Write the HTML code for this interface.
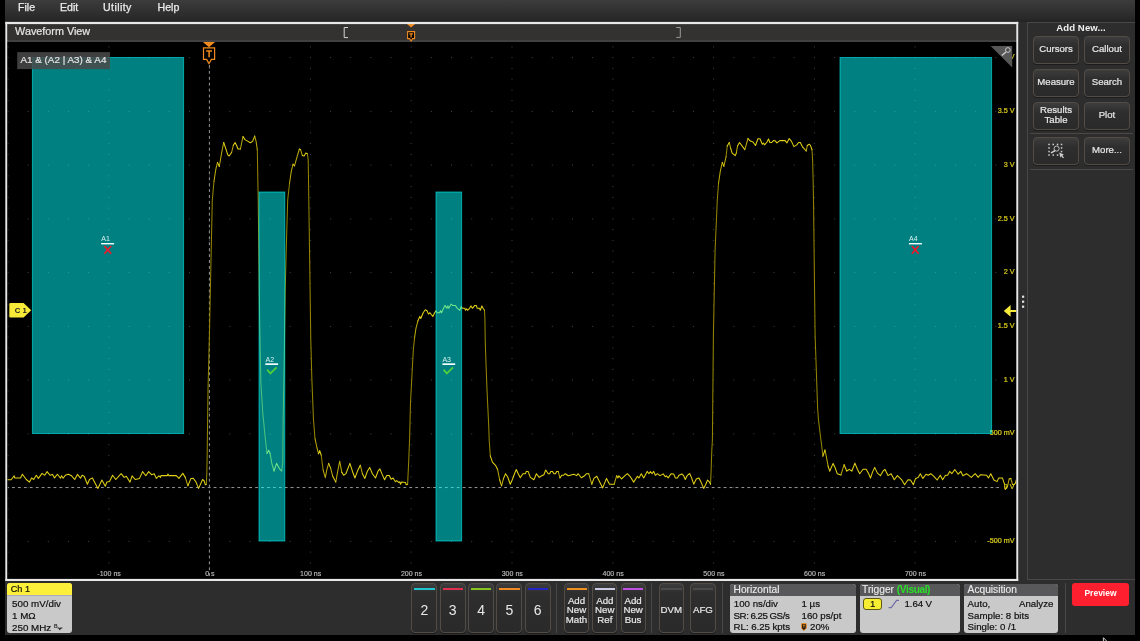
<!DOCTYPE html>
<html><head><meta charset="utf-8"><title>Scope</title>
<style>
html,body{margin:0;padding:0;background:#000;}
body{width:1140px;height:641px;position:relative;overflow:hidden;font-family:"Liberation Sans",sans-serif;}
.abs{position:absolute;}
#bg{left:5px;top:0;width:1130px;height:635px;background:#2d2d2d;}
#menu{left:5px;top:0;width:1130px;height:22px;background:linear-gradient(#3c3c3c 0%,#2c2c2c 70%,#242424 100%);}
#menu span{position:absolute;top:0.45px;font-size:10.6px;color:#ececec;line-height:14px;-webkit-text-stroke:0.25px #ececec;}
#frame{left:6px;top:23px;width:1011px;height:557px;background:#000;}
#title{left:7px;top:24px;width:1010px;height:18px;background:#333231;border-bottom:0;}
#titleline{left:7px;top:40px;width:1010px;height:2px;background:#414141;}
#title span{position:absolute;left:8.1px;top:0.45px;font-size:10.8px;color:#e6e6e6;line-height:14px;-webkit-text-stroke:0.2px #e6e6e6;}
#panel{left:1027px;top:22px;width:108px;height:558px;border:1px solid #4b4744;border-right:0;box-sizing:border-box;background:#2d2d2d;}
.btn{position:absolute;box-sizing:border-box;border:1px solid #524c47;border-radius:4px;background:linear-gradient(#3d3d3e 0,#2e2e2e 9px,#2a2a2a 100%);color:#e8e8e8;text-align:center;box-shadow:0 1px 0 #1c1c1c;}
.pb{width:46px;height:28px;font-size:9.6px;line-height:24.2px;-webkit-text-stroke:0.2px #e8e8e8;}
.sep{position:absolute;background:#4b4744;}
.cb{top:583px;width:26px;height:50px;font-size:14px;line-height:52.4px;}
.cb i{position:absolute;left:2px;top:4px;width:20.4px;height:2px;display:block;}
.tb{top:583px;width:25px;height:50px;font-size:9.7px;line-height:9.6px;-webkit-text-stroke:0.2px #e8e8e8;}
.tb i{position:absolute;left:1.5px;top:4px;width:20px;height:2px;display:block;}
.tb b{font-weight:normal;display:block;position:absolute;left:-4px;right:-4px;}
.badge{position:absolute;top:584px;height:49px;border-radius:3px;background:#c9c9c9;overflow:hidden;color:#101010;font-size:9.7px;-webkit-text-stroke:0.2px #101010;}
.badge .hd{position:absolute;left:0;top:0;right:0;height:11.5px;background:#58585a;color:#eaeaea;font-size:10.2px;line-height:11px;-webkit-text-stroke:0.15px #eaeaea;}
.badge .hd span{position:absolute;left:3.6px;top:0.4px;white-space:nowrap;}
.badge p{position:absolute;margin:0;white-space:nowrap;line-height:11px;}
svg text{font-family:"Liberation Sans",sans-serif;}
#root{position:absolute;left:0;top:0;width:1140px;height:641px;will-change:transform;}
</style></head><body><div id="root">
<div class="abs" id="bg"></div>
<div class="abs" id="menu"><span style="left:13px">File</span><span style="left:55px">Edit</span><span style="left:98px;letter-spacing:0.42px">Utility</span><span style="left:152.5px">Help</span></div>
<div class="abs" id="frame"></div>
<div class="abs" id="title"><span>Waveform View</span></div>
<div class="abs" id="titleline"></div>

<svg class="abs" style="left:0;top:0" width="1140" height="641" viewBox="0 0 1140 641">
<defs><clipPath id="pc"><rect x="7.5" y="42" width="1009" height="537"/></clipPath></defs>
<g clip-path="url(#pc)">
<g fill="#444444"><rect x="7.5" y="46.4" width="1" height="1"/><rect x="7.5" y="57.1" width="1" height="1"/><rect x="7.5" y="67.9" width="1" height="1"/><rect x="7.5" y="78.6" width="1" height="1"/><rect x="7.5" y="89.4" width="1" height="1"/><rect x="7.5" y="100.1" width="1" height="1"/><rect x="7.5" y="110.9" width="1" height="1"/><rect x="7.5" y="121.6" width="1" height="1"/><rect x="7.5" y="132.4" width="1" height="1"/><rect x="7.5" y="143.1" width="1" height="1"/><rect x="7.5" y="153.9" width="1" height="1"/><rect x="7.5" y="164.6" width="1" height="1"/><rect x="7.5" y="175.4" width="1" height="1"/><rect x="7.5" y="186.1" width="1" height="1"/><rect x="7.5" y="196.9" width="1" height="1"/><rect x="7.5" y="207.6" width="1" height="1"/><rect x="7.5" y="218.4" width="1" height="1"/><rect x="7.5" y="229.1" width="1" height="1"/><rect x="7.5" y="239.9" width="1" height="1"/><rect x="7.5" y="250.6" width="1" height="1"/><rect x="7.5" y="261.4" width="1" height="1"/><rect x="7.5" y="272.1" width="1" height="1"/><rect x="7.5" y="282.9" width="1" height="1"/><rect x="7.5" y="293.6" width="1" height="1"/><rect x="7.5" y="304.4" width="1" height="1"/><rect x="7.5" y="315.1" width="1" height="1"/><rect x="7.5" y="325.9" width="1" height="1"/><rect x="7.5" y="336.6" width="1" height="1"/><rect x="7.5" y="347.4" width="1" height="1"/><rect x="7.5" y="358.1" width="1" height="1"/><rect x="7.5" y="368.9" width="1" height="1"/><rect x="7.5" y="379.6" width="1" height="1"/><rect x="7.5" y="390.4" width="1" height="1"/><rect x="7.5" y="401.1" width="1" height="1"/><rect x="7.5" y="411.9" width="1" height="1"/><rect x="7.5" y="422.6" width="1" height="1"/><rect x="7.5" y="433.4" width="1" height="1"/><rect x="7.5" y="444.1" width="1" height="1"/><rect x="7.5" y="454.9" width="1" height="1"/><rect x="7.5" y="465.6" width="1" height="1"/><rect x="7.5" y="476.4" width="1" height="1"/><rect x="7.5" y="487.1" width="1" height="1"/><rect x="7.5" y="497.9" width="1" height="1"/><rect x="7.5" y="508.6" width="1" height="1"/><rect x="7.5" y="519.4" width="1" height="1"/><rect x="7.5" y="530.1" width="1" height="1"/><rect x="7.5" y="540.9" width="1" height="1"/><rect x="7.5" y="551.6" width="1" height="1"/><rect x="7.5" y="562.4" width="1" height="1"/><rect x="7.5" y="573.1" width="1" height="1"/><rect x="27.7" y="57.1" width="1" height="1"/><rect x="27.7" y="110.9" width="1" height="1"/><rect x="27.7" y="164.6" width="1" height="1"/><rect x="27.7" y="218.4" width="1" height="1"/><rect x="27.7" y="272.1" width="1" height="1"/><rect x="27.7" y="325.9" width="1" height="1"/><rect x="27.7" y="379.6" width="1" height="1"/><rect x="27.7" y="433.4" width="1" height="1"/><rect x="27.7" y="487.1" width="1" height="1"/><rect x="27.7" y="540.9" width="1" height="1"/><rect x="47.8" y="57.1" width="1" height="1"/><rect x="47.8" y="110.9" width="1" height="1"/><rect x="47.8" y="164.6" width="1" height="1"/><rect x="47.8" y="218.4" width="1" height="1"/><rect x="47.8" y="272.1" width="1" height="1"/><rect x="47.8" y="325.9" width="1" height="1"/><rect x="47.8" y="379.6" width="1" height="1"/><rect x="47.8" y="433.4" width="1" height="1"/><rect x="47.8" y="487.1" width="1" height="1"/><rect x="47.8" y="540.9" width="1" height="1"/><rect x="68" y="57.1" width="1" height="1"/><rect x="68" y="110.9" width="1" height="1"/><rect x="68" y="164.6" width="1" height="1"/><rect x="68" y="218.4" width="1" height="1"/><rect x="68" y="272.1" width="1" height="1"/><rect x="68" y="325.9" width="1" height="1"/><rect x="68" y="379.6" width="1" height="1"/><rect x="68" y="433.4" width="1" height="1"/><rect x="68" y="487.1" width="1" height="1"/><rect x="68" y="540.9" width="1" height="1"/><rect x="88.1" y="57.1" width="1" height="1"/><rect x="88.1" y="110.9" width="1" height="1"/><rect x="88.1" y="164.6" width="1" height="1"/><rect x="88.1" y="218.4" width="1" height="1"/><rect x="88.1" y="272.1" width="1" height="1"/><rect x="88.1" y="325.9" width="1" height="1"/><rect x="88.1" y="379.6" width="1" height="1"/><rect x="88.1" y="433.4" width="1" height="1"/><rect x="88.1" y="487.1" width="1" height="1"/><rect x="88.1" y="540.9" width="1" height="1"/><rect x="108.3" y="46.4" width="1" height="1"/><rect x="108.3" y="57.1" width="1" height="1"/><rect x="108.3" y="67.9" width="1" height="1"/><rect x="108.3" y="78.6" width="1" height="1"/><rect x="108.3" y="89.4" width="1" height="1"/><rect x="108.3" y="100.1" width="1" height="1"/><rect x="108.3" y="110.9" width="1" height="1"/><rect x="108.3" y="121.6" width="1" height="1"/><rect x="108.3" y="132.4" width="1" height="1"/><rect x="108.3" y="143.1" width="1" height="1"/><rect x="108.3" y="153.9" width="1" height="1"/><rect x="108.3" y="164.6" width="1" height="1"/><rect x="108.3" y="175.4" width="1" height="1"/><rect x="108.3" y="186.1" width="1" height="1"/><rect x="108.3" y="196.9" width="1" height="1"/><rect x="108.3" y="207.6" width="1" height="1"/><rect x="108.3" y="218.4" width="1" height="1"/><rect x="108.3" y="229.1" width="1" height="1"/><rect x="108.3" y="239.9" width="1" height="1"/><rect x="108.3" y="250.6" width="1" height="1"/><rect x="108.3" y="261.4" width="1" height="1"/><rect x="108.3" y="272.1" width="1" height="1"/><rect x="108.3" y="282.9" width="1" height="1"/><rect x="108.3" y="293.6" width="1" height="1"/><rect x="108.3" y="304.4" width="1" height="1"/><rect x="108.3" y="315.1" width="1" height="1"/><rect x="108.3" y="325.9" width="1" height="1"/><rect x="108.3" y="336.6" width="1" height="1"/><rect x="108.3" y="347.4" width="1" height="1"/><rect x="108.3" y="358.1" width="1" height="1"/><rect x="108.3" y="368.9" width="1" height="1"/><rect x="108.3" y="379.6" width="1" height="1"/><rect x="108.3" y="390.4" width="1" height="1"/><rect x="108.3" y="401.1" width="1" height="1"/><rect x="108.3" y="411.9" width="1" height="1"/><rect x="108.3" y="422.6" width="1" height="1"/><rect x="108.3" y="433.4" width="1" height="1"/><rect x="108.3" y="444.1" width="1" height="1"/><rect x="108.3" y="454.9" width="1" height="1"/><rect x="108.3" y="465.6" width="1" height="1"/><rect x="108.3" y="476.4" width="1" height="1"/><rect x="108.3" y="487.1" width="1" height="1"/><rect x="108.3" y="497.9" width="1" height="1"/><rect x="108.3" y="508.6" width="1" height="1"/><rect x="108.3" y="519.4" width="1" height="1"/><rect x="108.3" y="530.1" width="1" height="1"/><rect x="108.3" y="540.9" width="1" height="1"/><rect x="108.3" y="551.6" width="1" height="1"/><rect x="108.3" y="562.4" width="1" height="1"/><rect x="108.3" y="573.1" width="1" height="1"/><rect x="128.5" y="57.1" width="1" height="1"/><rect x="128.5" y="110.9" width="1" height="1"/><rect x="128.5" y="164.6" width="1" height="1"/><rect x="128.5" y="218.4" width="1" height="1"/><rect x="128.5" y="272.1" width="1" height="1"/><rect x="128.5" y="325.9" width="1" height="1"/><rect x="128.5" y="379.6" width="1" height="1"/><rect x="128.5" y="433.4" width="1" height="1"/><rect x="128.5" y="487.1" width="1" height="1"/><rect x="128.5" y="540.9" width="1" height="1"/><rect x="148.6" y="57.1" width="1" height="1"/><rect x="148.6" y="110.9" width="1" height="1"/><rect x="148.6" y="164.6" width="1" height="1"/><rect x="148.6" y="218.4" width="1" height="1"/><rect x="148.6" y="272.1" width="1" height="1"/><rect x="148.6" y="325.9" width="1" height="1"/><rect x="148.6" y="379.6" width="1" height="1"/><rect x="148.6" y="433.4" width="1" height="1"/><rect x="148.6" y="487.1" width="1" height="1"/><rect x="148.6" y="540.9" width="1" height="1"/><rect x="168.8" y="57.1" width="1" height="1"/><rect x="168.8" y="110.9" width="1" height="1"/><rect x="168.8" y="164.6" width="1" height="1"/><rect x="168.8" y="218.4" width="1" height="1"/><rect x="168.8" y="272.1" width="1" height="1"/><rect x="168.8" y="325.9" width="1" height="1"/><rect x="168.8" y="379.6" width="1" height="1"/><rect x="168.8" y="433.4" width="1" height="1"/><rect x="168.8" y="487.1" width="1" height="1"/><rect x="168.8" y="540.9" width="1" height="1"/><rect x="188.9" y="57.1" width="1" height="1"/><rect x="188.9" y="110.9" width="1" height="1"/><rect x="188.9" y="164.6" width="1" height="1"/><rect x="188.9" y="218.4" width="1" height="1"/><rect x="188.9" y="272.1" width="1" height="1"/><rect x="188.9" y="325.9" width="1" height="1"/><rect x="188.9" y="379.6" width="1" height="1"/><rect x="188.9" y="433.4" width="1" height="1"/><rect x="188.9" y="487.1" width="1" height="1"/><rect x="188.9" y="540.9" width="1" height="1"/><rect x="209.1" y="46.4" width="1" height="1"/><rect x="209.1" y="57.1" width="1" height="1"/><rect x="209.1" y="67.9" width="1" height="1"/><rect x="209.1" y="78.6" width="1" height="1"/><rect x="209.1" y="89.4" width="1" height="1"/><rect x="209.1" y="100.1" width="1" height="1"/><rect x="209.1" y="110.9" width="1" height="1"/><rect x="209.1" y="121.6" width="1" height="1"/><rect x="209.1" y="132.4" width="1" height="1"/><rect x="209.1" y="143.1" width="1" height="1"/><rect x="209.1" y="153.9" width="1" height="1"/><rect x="209.1" y="164.6" width="1" height="1"/><rect x="209.1" y="175.4" width="1" height="1"/><rect x="209.1" y="186.1" width="1" height="1"/><rect x="209.1" y="196.9" width="1" height="1"/><rect x="209.1" y="207.6" width="1" height="1"/><rect x="209.1" y="218.4" width="1" height="1"/><rect x="209.1" y="229.1" width="1" height="1"/><rect x="209.1" y="239.9" width="1" height="1"/><rect x="209.1" y="250.6" width="1" height="1"/><rect x="209.1" y="261.4" width="1" height="1"/><rect x="209.1" y="272.1" width="1" height="1"/><rect x="209.1" y="282.9" width="1" height="1"/><rect x="209.1" y="293.6" width="1" height="1"/><rect x="209.1" y="304.4" width="1" height="1"/><rect x="209.1" y="315.1" width="1" height="1"/><rect x="209.1" y="325.9" width="1" height="1"/><rect x="209.1" y="336.6" width="1" height="1"/><rect x="209.1" y="347.4" width="1" height="1"/><rect x="209.1" y="358.1" width="1" height="1"/><rect x="209.1" y="368.9" width="1" height="1"/><rect x="209.1" y="379.6" width="1" height="1"/><rect x="209.1" y="390.4" width="1" height="1"/><rect x="209.1" y="401.1" width="1" height="1"/><rect x="209.1" y="411.9" width="1" height="1"/><rect x="209.1" y="422.6" width="1" height="1"/><rect x="209.1" y="433.4" width="1" height="1"/><rect x="209.1" y="444.1" width="1" height="1"/><rect x="209.1" y="454.9" width="1" height="1"/><rect x="209.1" y="465.6" width="1" height="1"/><rect x="209.1" y="476.4" width="1" height="1"/><rect x="209.1" y="487.1" width="1" height="1"/><rect x="209.1" y="497.9" width="1" height="1"/><rect x="209.1" y="508.6" width="1" height="1"/><rect x="209.1" y="519.4" width="1" height="1"/><rect x="209.1" y="530.1" width="1" height="1"/><rect x="209.1" y="540.9" width="1" height="1"/><rect x="209.1" y="551.6" width="1" height="1"/><rect x="209.1" y="562.4" width="1" height="1"/><rect x="209.1" y="573.1" width="1" height="1"/><rect x="229.3" y="57.1" width="1" height="1"/><rect x="229.3" y="110.9" width="1" height="1"/><rect x="229.3" y="164.6" width="1" height="1"/><rect x="229.3" y="218.4" width="1" height="1"/><rect x="229.3" y="272.1" width="1" height="1"/><rect x="229.3" y="325.9" width="1" height="1"/><rect x="229.3" y="379.6" width="1" height="1"/><rect x="229.3" y="433.4" width="1" height="1"/><rect x="229.3" y="487.1" width="1" height="1"/><rect x="229.3" y="540.9" width="1" height="1"/><rect x="249.4" y="57.1" width="1" height="1"/><rect x="249.4" y="110.9" width="1" height="1"/><rect x="249.4" y="164.6" width="1" height="1"/><rect x="249.4" y="218.4" width="1" height="1"/><rect x="249.4" y="272.1" width="1" height="1"/><rect x="249.4" y="325.9" width="1" height="1"/><rect x="249.4" y="379.6" width="1" height="1"/><rect x="249.4" y="433.4" width="1" height="1"/><rect x="249.4" y="487.1" width="1" height="1"/><rect x="249.4" y="540.9" width="1" height="1"/><rect x="269.6" y="57.1" width="1" height="1"/><rect x="269.6" y="110.9" width="1" height="1"/><rect x="269.6" y="164.6" width="1" height="1"/><rect x="269.6" y="218.4" width="1" height="1"/><rect x="269.6" y="272.1" width="1" height="1"/><rect x="269.6" y="325.9" width="1" height="1"/><rect x="269.6" y="379.6" width="1" height="1"/><rect x="269.6" y="433.4" width="1" height="1"/><rect x="269.6" y="487.1" width="1" height="1"/><rect x="269.6" y="540.9" width="1" height="1"/><rect x="289.7" y="57.1" width="1" height="1"/><rect x="289.7" y="110.9" width="1" height="1"/><rect x="289.7" y="164.6" width="1" height="1"/><rect x="289.7" y="218.4" width="1" height="1"/><rect x="289.7" y="272.1" width="1" height="1"/><rect x="289.7" y="325.9" width="1" height="1"/><rect x="289.7" y="379.6" width="1" height="1"/><rect x="289.7" y="433.4" width="1" height="1"/><rect x="289.7" y="487.1" width="1" height="1"/><rect x="289.7" y="540.9" width="1" height="1"/><rect x="309.9" y="46.4" width="1" height="1"/><rect x="309.9" y="57.1" width="1" height="1"/><rect x="309.9" y="67.9" width="1" height="1"/><rect x="309.9" y="78.6" width="1" height="1"/><rect x="309.9" y="89.4" width="1" height="1"/><rect x="309.9" y="100.1" width="1" height="1"/><rect x="309.9" y="110.9" width="1" height="1"/><rect x="309.9" y="121.6" width="1" height="1"/><rect x="309.9" y="132.4" width="1" height="1"/><rect x="309.9" y="143.1" width="1" height="1"/><rect x="309.9" y="153.9" width="1" height="1"/><rect x="309.9" y="164.6" width="1" height="1"/><rect x="309.9" y="175.4" width="1" height="1"/><rect x="309.9" y="186.1" width="1" height="1"/><rect x="309.9" y="196.9" width="1" height="1"/><rect x="309.9" y="207.6" width="1" height="1"/><rect x="309.9" y="218.4" width="1" height="1"/><rect x="309.9" y="229.1" width="1" height="1"/><rect x="309.9" y="239.9" width="1" height="1"/><rect x="309.9" y="250.6" width="1" height="1"/><rect x="309.9" y="261.4" width="1" height="1"/><rect x="309.9" y="272.1" width="1" height="1"/><rect x="309.9" y="282.9" width="1" height="1"/><rect x="309.9" y="293.6" width="1" height="1"/><rect x="309.9" y="304.4" width="1" height="1"/><rect x="309.9" y="315.1" width="1" height="1"/><rect x="309.9" y="325.9" width="1" height="1"/><rect x="309.9" y="336.6" width="1" height="1"/><rect x="309.9" y="347.4" width="1" height="1"/><rect x="309.9" y="358.1" width="1" height="1"/><rect x="309.9" y="368.9" width="1" height="1"/><rect x="309.9" y="379.6" width="1" height="1"/><rect x="309.9" y="390.4" width="1" height="1"/><rect x="309.9" y="401.1" width="1" height="1"/><rect x="309.9" y="411.9" width="1" height="1"/><rect x="309.9" y="422.6" width="1" height="1"/><rect x="309.9" y="433.4" width="1" height="1"/><rect x="309.9" y="444.1" width="1" height="1"/><rect x="309.9" y="454.9" width="1" height="1"/><rect x="309.9" y="465.6" width="1" height="1"/><rect x="309.9" y="476.4" width="1" height="1"/><rect x="309.9" y="487.1" width="1" height="1"/><rect x="309.9" y="497.9" width="1" height="1"/><rect x="309.9" y="508.6" width="1" height="1"/><rect x="309.9" y="519.4" width="1" height="1"/><rect x="309.9" y="530.1" width="1" height="1"/><rect x="309.9" y="540.9" width="1" height="1"/><rect x="309.9" y="551.6" width="1" height="1"/><rect x="309.9" y="562.4" width="1" height="1"/><rect x="309.9" y="573.1" width="1" height="1"/><rect x="330.1" y="57.1" width="1" height="1"/><rect x="330.1" y="110.9" width="1" height="1"/><rect x="330.1" y="164.6" width="1" height="1"/><rect x="330.1" y="218.4" width="1" height="1"/><rect x="330.1" y="272.1" width="1" height="1"/><rect x="330.1" y="325.9" width="1" height="1"/><rect x="330.1" y="379.6" width="1" height="1"/><rect x="330.1" y="433.4" width="1" height="1"/><rect x="330.1" y="487.1" width="1" height="1"/><rect x="330.1" y="540.9" width="1" height="1"/><rect x="350.2" y="57.1" width="1" height="1"/><rect x="350.2" y="110.9" width="1" height="1"/><rect x="350.2" y="164.6" width="1" height="1"/><rect x="350.2" y="218.4" width="1" height="1"/><rect x="350.2" y="272.1" width="1" height="1"/><rect x="350.2" y="325.9" width="1" height="1"/><rect x="350.2" y="379.6" width="1" height="1"/><rect x="350.2" y="433.4" width="1" height="1"/><rect x="350.2" y="487.1" width="1" height="1"/><rect x="350.2" y="540.9" width="1" height="1"/><rect x="370.4" y="57.1" width="1" height="1"/><rect x="370.4" y="110.9" width="1" height="1"/><rect x="370.4" y="164.6" width="1" height="1"/><rect x="370.4" y="218.4" width="1" height="1"/><rect x="370.4" y="272.1" width="1" height="1"/><rect x="370.4" y="325.9" width="1" height="1"/><rect x="370.4" y="379.6" width="1" height="1"/><rect x="370.4" y="433.4" width="1" height="1"/><rect x="370.4" y="487.1" width="1" height="1"/><rect x="370.4" y="540.9" width="1" height="1"/><rect x="390.5" y="57.1" width="1" height="1"/><rect x="390.5" y="110.9" width="1" height="1"/><rect x="390.5" y="164.6" width="1" height="1"/><rect x="390.5" y="218.4" width="1" height="1"/><rect x="390.5" y="272.1" width="1" height="1"/><rect x="390.5" y="325.9" width="1" height="1"/><rect x="390.5" y="379.6" width="1" height="1"/><rect x="390.5" y="433.4" width="1" height="1"/><rect x="390.5" y="487.1" width="1" height="1"/><rect x="390.5" y="540.9" width="1" height="1"/><rect x="410.7" y="46.4" width="1" height="1"/><rect x="410.7" y="57.1" width="1" height="1"/><rect x="410.7" y="67.9" width="1" height="1"/><rect x="410.7" y="78.6" width="1" height="1"/><rect x="410.7" y="89.4" width="1" height="1"/><rect x="410.7" y="100.1" width="1" height="1"/><rect x="410.7" y="110.9" width="1" height="1"/><rect x="410.7" y="121.6" width="1" height="1"/><rect x="410.7" y="132.4" width="1" height="1"/><rect x="410.7" y="143.1" width="1" height="1"/><rect x="410.7" y="153.9" width="1" height="1"/><rect x="410.7" y="164.6" width="1" height="1"/><rect x="410.7" y="175.4" width="1" height="1"/><rect x="410.7" y="186.1" width="1" height="1"/><rect x="410.7" y="196.9" width="1" height="1"/><rect x="410.7" y="207.6" width="1" height="1"/><rect x="410.7" y="218.4" width="1" height="1"/><rect x="410.7" y="229.1" width="1" height="1"/><rect x="410.7" y="239.9" width="1" height="1"/><rect x="410.7" y="250.6" width="1" height="1"/><rect x="410.7" y="261.4" width="1" height="1"/><rect x="410.7" y="272.1" width="1" height="1"/><rect x="410.7" y="282.9" width="1" height="1"/><rect x="410.7" y="293.6" width="1" height="1"/><rect x="410.7" y="304.4" width="1" height="1"/><rect x="410.7" y="315.1" width="1" height="1"/><rect x="410.7" y="325.9" width="1" height="1"/><rect x="410.7" y="336.6" width="1" height="1"/><rect x="410.7" y="347.4" width="1" height="1"/><rect x="410.7" y="358.1" width="1" height="1"/><rect x="410.7" y="368.9" width="1" height="1"/><rect x="410.7" y="379.6" width="1" height="1"/><rect x="410.7" y="390.4" width="1" height="1"/><rect x="410.7" y="401.1" width="1" height="1"/><rect x="410.7" y="411.9" width="1" height="1"/><rect x="410.7" y="422.6" width="1" height="1"/><rect x="410.7" y="433.4" width="1" height="1"/><rect x="410.7" y="444.1" width="1" height="1"/><rect x="410.7" y="454.9" width="1" height="1"/><rect x="410.7" y="465.6" width="1" height="1"/><rect x="410.7" y="476.4" width="1" height="1"/><rect x="410.7" y="487.1" width="1" height="1"/><rect x="410.7" y="497.9" width="1" height="1"/><rect x="410.7" y="508.6" width="1" height="1"/><rect x="410.7" y="519.4" width="1" height="1"/><rect x="410.7" y="530.1" width="1" height="1"/><rect x="410.7" y="540.9" width="1" height="1"/><rect x="410.7" y="551.6" width="1" height="1"/><rect x="410.7" y="562.4" width="1" height="1"/><rect x="410.7" y="573.1" width="1" height="1"/><rect x="430.9" y="57.1" width="1" height="1"/><rect x="430.9" y="110.9" width="1" height="1"/><rect x="430.9" y="164.6" width="1" height="1"/><rect x="430.9" y="218.4" width="1" height="1"/><rect x="430.9" y="272.1" width="1" height="1"/><rect x="430.9" y="325.9" width="1" height="1"/><rect x="430.9" y="379.6" width="1" height="1"/><rect x="430.9" y="433.4" width="1" height="1"/><rect x="430.9" y="487.1" width="1" height="1"/><rect x="430.9" y="540.9" width="1" height="1"/><rect x="451" y="57.1" width="1" height="1"/><rect x="451" y="110.9" width="1" height="1"/><rect x="451" y="164.6" width="1" height="1"/><rect x="451" y="218.4" width="1" height="1"/><rect x="451" y="272.1" width="1" height="1"/><rect x="451" y="325.9" width="1" height="1"/><rect x="451" y="379.6" width="1" height="1"/><rect x="451" y="433.4" width="1" height="1"/><rect x="451" y="487.1" width="1" height="1"/><rect x="451" y="540.9" width="1" height="1"/><rect x="471.2" y="57.1" width="1" height="1"/><rect x="471.2" y="110.9" width="1" height="1"/><rect x="471.2" y="164.6" width="1" height="1"/><rect x="471.2" y="218.4" width="1" height="1"/><rect x="471.2" y="272.1" width="1" height="1"/><rect x="471.2" y="325.9" width="1" height="1"/><rect x="471.2" y="379.6" width="1" height="1"/><rect x="471.2" y="433.4" width="1" height="1"/><rect x="471.2" y="487.1" width="1" height="1"/><rect x="471.2" y="540.9" width="1" height="1"/><rect x="491.3" y="57.1" width="1" height="1"/><rect x="491.3" y="110.9" width="1" height="1"/><rect x="491.3" y="164.6" width="1" height="1"/><rect x="491.3" y="218.4" width="1" height="1"/><rect x="491.3" y="272.1" width="1" height="1"/><rect x="491.3" y="325.9" width="1" height="1"/><rect x="491.3" y="379.6" width="1" height="1"/><rect x="491.3" y="433.4" width="1" height="1"/><rect x="491.3" y="487.1" width="1" height="1"/><rect x="491.3" y="540.9" width="1" height="1"/><rect x="511.5" y="46.4" width="1" height="1"/><rect x="511.5" y="57.1" width="1" height="1"/><rect x="511.5" y="67.9" width="1" height="1"/><rect x="511.5" y="78.6" width="1" height="1"/><rect x="511.5" y="89.4" width="1" height="1"/><rect x="511.5" y="100.1" width="1" height="1"/><rect x="511.5" y="110.9" width="1" height="1"/><rect x="511.5" y="121.6" width="1" height="1"/><rect x="511.5" y="132.4" width="1" height="1"/><rect x="511.5" y="143.1" width="1" height="1"/><rect x="511.5" y="153.9" width="1" height="1"/><rect x="511.5" y="164.6" width="1" height="1"/><rect x="511.5" y="175.4" width="1" height="1"/><rect x="511.5" y="186.1" width="1" height="1"/><rect x="511.5" y="196.9" width="1" height="1"/><rect x="511.5" y="207.6" width="1" height="1"/><rect x="511.5" y="218.4" width="1" height="1"/><rect x="511.5" y="229.1" width="1" height="1"/><rect x="511.5" y="239.9" width="1" height="1"/><rect x="511.5" y="250.6" width="1" height="1"/><rect x="511.5" y="261.4" width="1" height="1"/><rect x="511.5" y="272.1" width="1" height="1"/><rect x="511.5" y="282.9" width="1" height="1"/><rect x="511.5" y="293.6" width="1" height="1"/><rect x="511.5" y="304.4" width="1" height="1"/><rect x="511.5" y="315.1" width="1" height="1"/><rect x="511.5" y="325.9" width="1" height="1"/><rect x="511.5" y="336.6" width="1" height="1"/><rect x="511.5" y="347.4" width="1" height="1"/><rect x="511.5" y="358.1" width="1" height="1"/><rect x="511.5" y="368.9" width="1" height="1"/><rect x="511.5" y="379.6" width="1" height="1"/><rect x="511.5" y="390.4" width="1" height="1"/><rect x="511.5" y="401.1" width="1" height="1"/><rect x="511.5" y="411.9" width="1" height="1"/><rect x="511.5" y="422.6" width="1" height="1"/><rect x="511.5" y="433.4" width="1" height="1"/><rect x="511.5" y="444.1" width="1" height="1"/><rect x="511.5" y="454.9" width="1" height="1"/><rect x="511.5" y="465.6" width="1" height="1"/><rect x="511.5" y="476.4" width="1" height="1"/><rect x="511.5" y="487.1" width="1" height="1"/><rect x="511.5" y="497.9" width="1" height="1"/><rect x="511.5" y="508.6" width="1" height="1"/><rect x="511.5" y="519.4" width="1" height="1"/><rect x="511.5" y="530.1" width="1" height="1"/><rect x="511.5" y="540.9" width="1" height="1"/><rect x="511.5" y="551.6" width="1" height="1"/><rect x="511.5" y="562.4" width="1" height="1"/><rect x="511.5" y="573.1" width="1" height="1"/><rect x="531.7" y="57.1" width="1" height="1"/><rect x="531.7" y="110.9" width="1" height="1"/><rect x="531.7" y="164.6" width="1" height="1"/><rect x="531.7" y="218.4" width="1" height="1"/><rect x="531.7" y="272.1" width="1" height="1"/><rect x="531.7" y="325.9" width="1" height="1"/><rect x="531.7" y="379.6" width="1" height="1"/><rect x="531.7" y="433.4" width="1" height="1"/><rect x="531.7" y="487.1" width="1" height="1"/><rect x="531.7" y="540.9" width="1" height="1"/><rect x="551.8" y="57.1" width="1" height="1"/><rect x="551.8" y="110.9" width="1" height="1"/><rect x="551.8" y="164.6" width="1" height="1"/><rect x="551.8" y="218.4" width="1" height="1"/><rect x="551.8" y="272.1" width="1" height="1"/><rect x="551.8" y="325.9" width="1" height="1"/><rect x="551.8" y="379.6" width="1" height="1"/><rect x="551.8" y="433.4" width="1" height="1"/><rect x="551.8" y="487.1" width="1" height="1"/><rect x="551.8" y="540.9" width="1" height="1"/><rect x="572" y="57.1" width="1" height="1"/><rect x="572" y="110.9" width="1" height="1"/><rect x="572" y="164.6" width="1" height="1"/><rect x="572" y="218.4" width="1" height="1"/><rect x="572" y="272.1" width="1" height="1"/><rect x="572" y="325.9" width="1" height="1"/><rect x="572" y="379.6" width="1" height="1"/><rect x="572" y="433.4" width="1" height="1"/><rect x="572" y="487.1" width="1" height="1"/><rect x="572" y="540.9" width="1" height="1"/><rect x="592.1" y="57.1" width="1" height="1"/><rect x="592.1" y="110.9" width="1" height="1"/><rect x="592.1" y="164.6" width="1" height="1"/><rect x="592.1" y="218.4" width="1" height="1"/><rect x="592.1" y="272.1" width="1" height="1"/><rect x="592.1" y="325.9" width="1" height="1"/><rect x="592.1" y="379.6" width="1" height="1"/><rect x="592.1" y="433.4" width="1" height="1"/><rect x="592.1" y="487.1" width="1" height="1"/><rect x="592.1" y="540.9" width="1" height="1"/><rect x="612.3" y="46.4" width="1" height="1"/><rect x="612.3" y="57.1" width="1" height="1"/><rect x="612.3" y="67.9" width="1" height="1"/><rect x="612.3" y="78.6" width="1" height="1"/><rect x="612.3" y="89.4" width="1" height="1"/><rect x="612.3" y="100.1" width="1" height="1"/><rect x="612.3" y="110.9" width="1" height="1"/><rect x="612.3" y="121.6" width="1" height="1"/><rect x="612.3" y="132.4" width="1" height="1"/><rect x="612.3" y="143.1" width="1" height="1"/><rect x="612.3" y="153.9" width="1" height="1"/><rect x="612.3" y="164.6" width="1" height="1"/><rect x="612.3" y="175.4" width="1" height="1"/><rect x="612.3" y="186.1" width="1" height="1"/><rect x="612.3" y="196.9" width="1" height="1"/><rect x="612.3" y="207.6" width="1" height="1"/><rect x="612.3" y="218.4" width="1" height="1"/><rect x="612.3" y="229.1" width="1" height="1"/><rect x="612.3" y="239.9" width="1" height="1"/><rect x="612.3" y="250.6" width="1" height="1"/><rect x="612.3" y="261.4" width="1" height="1"/><rect x="612.3" y="272.1" width="1" height="1"/><rect x="612.3" y="282.9" width="1" height="1"/><rect x="612.3" y="293.6" width="1" height="1"/><rect x="612.3" y="304.4" width="1" height="1"/><rect x="612.3" y="315.1" width="1" height="1"/><rect x="612.3" y="325.9" width="1" height="1"/><rect x="612.3" y="336.6" width="1" height="1"/><rect x="612.3" y="347.4" width="1" height="1"/><rect x="612.3" y="358.1" width="1" height="1"/><rect x="612.3" y="368.9" width="1" height="1"/><rect x="612.3" y="379.6" width="1" height="1"/><rect x="612.3" y="390.4" width="1" height="1"/><rect x="612.3" y="401.1" width="1" height="1"/><rect x="612.3" y="411.9" width="1" height="1"/><rect x="612.3" y="422.6" width="1" height="1"/><rect x="612.3" y="433.4" width="1" height="1"/><rect x="612.3" y="444.1" width="1" height="1"/><rect x="612.3" y="454.9" width="1" height="1"/><rect x="612.3" y="465.6" width="1" height="1"/><rect x="612.3" y="476.4" width="1" height="1"/><rect x="612.3" y="487.1" width="1" height="1"/><rect x="612.3" y="497.9" width="1" height="1"/><rect x="612.3" y="508.6" width="1" height="1"/><rect x="612.3" y="519.4" width="1" height="1"/><rect x="612.3" y="530.1" width="1" height="1"/><rect x="612.3" y="540.9" width="1" height="1"/><rect x="612.3" y="551.6" width="1" height="1"/><rect x="612.3" y="562.4" width="1" height="1"/><rect x="612.3" y="573.1" width="1" height="1"/><rect x="632.5" y="57.1" width="1" height="1"/><rect x="632.5" y="110.9" width="1" height="1"/><rect x="632.5" y="164.6" width="1" height="1"/><rect x="632.5" y="218.4" width="1" height="1"/><rect x="632.5" y="272.1" width="1" height="1"/><rect x="632.5" y="325.9" width="1" height="1"/><rect x="632.5" y="379.6" width="1" height="1"/><rect x="632.5" y="433.4" width="1" height="1"/><rect x="632.5" y="487.1" width="1" height="1"/><rect x="632.5" y="540.9" width="1" height="1"/><rect x="652.6" y="57.1" width="1" height="1"/><rect x="652.6" y="110.9" width="1" height="1"/><rect x="652.6" y="164.6" width="1" height="1"/><rect x="652.6" y="218.4" width="1" height="1"/><rect x="652.6" y="272.1" width="1" height="1"/><rect x="652.6" y="325.9" width="1" height="1"/><rect x="652.6" y="379.6" width="1" height="1"/><rect x="652.6" y="433.4" width="1" height="1"/><rect x="652.6" y="487.1" width="1" height="1"/><rect x="652.6" y="540.9" width="1" height="1"/><rect x="672.8" y="57.1" width="1" height="1"/><rect x="672.8" y="110.9" width="1" height="1"/><rect x="672.8" y="164.6" width="1" height="1"/><rect x="672.8" y="218.4" width="1" height="1"/><rect x="672.8" y="272.1" width="1" height="1"/><rect x="672.8" y="325.9" width="1" height="1"/><rect x="672.8" y="379.6" width="1" height="1"/><rect x="672.8" y="433.4" width="1" height="1"/><rect x="672.8" y="487.1" width="1" height="1"/><rect x="672.8" y="540.9" width="1" height="1"/><rect x="692.9" y="57.1" width="1" height="1"/><rect x="692.9" y="110.9" width="1" height="1"/><rect x="692.9" y="164.6" width="1" height="1"/><rect x="692.9" y="218.4" width="1" height="1"/><rect x="692.9" y="272.1" width="1" height="1"/><rect x="692.9" y="325.9" width="1" height="1"/><rect x="692.9" y="379.6" width="1" height="1"/><rect x="692.9" y="433.4" width="1" height="1"/><rect x="692.9" y="487.1" width="1" height="1"/><rect x="692.9" y="540.9" width="1" height="1"/><rect x="713.1" y="46.4" width="1" height="1"/><rect x="713.1" y="57.1" width="1" height="1"/><rect x="713.1" y="67.9" width="1" height="1"/><rect x="713.1" y="78.6" width="1" height="1"/><rect x="713.1" y="89.4" width="1" height="1"/><rect x="713.1" y="100.1" width="1" height="1"/><rect x="713.1" y="110.9" width="1" height="1"/><rect x="713.1" y="121.6" width="1" height="1"/><rect x="713.1" y="132.4" width="1" height="1"/><rect x="713.1" y="143.1" width="1" height="1"/><rect x="713.1" y="153.9" width="1" height="1"/><rect x="713.1" y="164.6" width="1" height="1"/><rect x="713.1" y="175.4" width="1" height="1"/><rect x="713.1" y="186.1" width="1" height="1"/><rect x="713.1" y="196.9" width="1" height="1"/><rect x="713.1" y="207.6" width="1" height="1"/><rect x="713.1" y="218.4" width="1" height="1"/><rect x="713.1" y="229.1" width="1" height="1"/><rect x="713.1" y="239.9" width="1" height="1"/><rect x="713.1" y="250.6" width="1" height="1"/><rect x="713.1" y="261.4" width="1" height="1"/><rect x="713.1" y="272.1" width="1" height="1"/><rect x="713.1" y="282.9" width="1" height="1"/><rect x="713.1" y="293.6" width="1" height="1"/><rect x="713.1" y="304.4" width="1" height="1"/><rect x="713.1" y="315.1" width="1" height="1"/><rect x="713.1" y="325.9" width="1" height="1"/><rect x="713.1" y="336.6" width="1" height="1"/><rect x="713.1" y="347.4" width="1" height="1"/><rect x="713.1" y="358.1" width="1" height="1"/><rect x="713.1" y="368.9" width="1" height="1"/><rect x="713.1" y="379.6" width="1" height="1"/><rect x="713.1" y="390.4" width="1" height="1"/><rect x="713.1" y="401.1" width="1" height="1"/><rect x="713.1" y="411.9" width="1" height="1"/><rect x="713.1" y="422.6" width="1" height="1"/><rect x="713.1" y="433.4" width="1" height="1"/><rect x="713.1" y="444.1" width="1" height="1"/><rect x="713.1" y="454.9" width="1" height="1"/><rect x="713.1" y="465.6" width="1" height="1"/><rect x="713.1" y="476.4" width="1" height="1"/><rect x="713.1" y="487.1" width="1" height="1"/><rect x="713.1" y="497.9" width="1" height="1"/><rect x="713.1" y="508.6" width="1" height="1"/><rect x="713.1" y="519.4" width="1" height="1"/><rect x="713.1" y="530.1" width="1" height="1"/><rect x="713.1" y="540.9" width="1" height="1"/><rect x="713.1" y="551.6" width="1" height="1"/><rect x="713.1" y="562.4" width="1" height="1"/><rect x="713.1" y="573.1" width="1" height="1"/><rect x="733.3" y="57.1" width="1" height="1"/><rect x="733.3" y="110.9" width="1" height="1"/><rect x="733.3" y="164.6" width="1" height="1"/><rect x="733.3" y="218.4" width="1" height="1"/><rect x="733.3" y="272.1" width="1" height="1"/><rect x="733.3" y="325.9" width="1" height="1"/><rect x="733.3" y="379.6" width="1" height="1"/><rect x="733.3" y="433.4" width="1" height="1"/><rect x="733.3" y="487.1" width="1" height="1"/><rect x="733.3" y="540.9" width="1" height="1"/><rect x="753.4" y="57.1" width="1" height="1"/><rect x="753.4" y="110.9" width="1" height="1"/><rect x="753.4" y="164.6" width="1" height="1"/><rect x="753.4" y="218.4" width="1" height="1"/><rect x="753.4" y="272.1" width="1" height="1"/><rect x="753.4" y="325.9" width="1" height="1"/><rect x="753.4" y="379.6" width="1" height="1"/><rect x="753.4" y="433.4" width="1" height="1"/><rect x="753.4" y="487.1" width="1" height="1"/><rect x="753.4" y="540.9" width="1" height="1"/><rect x="773.6" y="57.1" width="1" height="1"/><rect x="773.6" y="110.9" width="1" height="1"/><rect x="773.6" y="164.6" width="1" height="1"/><rect x="773.6" y="218.4" width="1" height="1"/><rect x="773.6" y="272.1" width="1" height="1"/><rect x="773.6" y="325.9" width="1" height="1"/><rect x="773.6" y="379.6" width="1" height="1"/><rect x="773.6" y="433.4" width="1" height="1"/><rect x="773.6" y="487.1" width="1" height="1"/><rect x="773.6" y="540.9" width="1" height="1"/><rect x="793.7" y="57.1" width="1" height="1"/><rect x="793.7" y="110.9" width="1" height="1"/><rect x="793.7" y="164.6" width="1" height="1"/><rect x="793.7" y="218.4" width="1" height="1"/><rect x="793.7" y="272.1" width="1" height="1"/><rect x="793.7" y="325.9" width="1" height="1"/><rect x="793.7" y="379.6" width="1" height="1"/><rect x="793.7" y="433.4" width="1" height="1"/><rect x="793.7" y="487.1" width="1" height="1"/><rect x="793.7" y="540.9" width="1" height="1"/><rect x="813.9" y="46.4" width="1" height="1"/><rect x="813.9" y="57.1" width="1" height="1"/><rect x="813.9" y="67.9" width="1" height="1"/><rect x="813.9" y="78.6" width="1" height="1"/><rect x="813.9" y="89.4" width="1" height="1"/><rect x="813.9" y="100.1" width="1" height="1"/><rect x="813.9" y="110.9" width="1" height="1"/><rect x="813.9" y="121.6" width="1" height="1"/><rect x="813.9" y="132.4" width="1" height="1"/><rect x="813.9" y="143.1" width="1" height="1"/><rect x="813.9" y="153.9" width="1" height="1"/><rect x="813.9" y="164.6" width="1" height="1"/><rect x="813.9" y="175.4" width="1" height="1"/><rect x="813.9" y="186.1" width="1" height="1"/><rect x="813.9" y="196.9" width="1" height="1"/><rect x="813.9" y="207.6" width="1" height="1"/><rect x="813.9" y="218.4" width="1" height="1"/><rect x="813.9" y="229.1" width="1" height="1"/><rect x="813.9" y="239.9" width="1" height="1"/><rect x="813.9" y="250.6" width="1" height="1"/><rect x="813.9" y="261.4" width="1" height="1"/><rect x="813.9" y="272.1" width="1" height="1"/><rect x="813.9" y="282.9" width="1" height="1"/><rect x="813.9" y="293.6" width="1" height="1"/><rect x="813.9" y="304.4" width="1" height="1"/><rect x="813.9" y="315.1" width="1" height="1"/><rect x="813.9" y="325.9" width="1" height="1"/><rect x="813.9" y="336.6" width="1" height="1"/><rect x="813.9" y="347.4" width="1" height="1"/><rect x="813.9" y="358.1" width="1" height="1"/><rect x="813.9" y="368.9" width="1" height="1"/><rect x="813.9" y="379.6" width="1" height="1"/><rect x="813.9" y="390.4" width="1" height="1"/><rect x="813.9" y="401.1" width="1" height="1"/><rect x="813.9" y="411.9" width="1" height="1"/><rect x="813.9" y="422.6" width="1" height="1"/><rect x="813.9" y="433.4" width="1" height="1"/><rect x="813.9" y="444.1" width="1" height="1"/><rect x="813.9" y="454.9" width="1" height="1"/><rect x="813.9" y="465.6" width="1" height="1"/><rect x="813.9" y="476.4" width="1" height="1"/><rect x="813.9" y="487.1" width="1" height="1"/><rect x="813.9" y="497.9" width="1" height="1"/><rect x="813.9" y="508.6" width="1" height="1"/><rect x="813.9" y="519.4" width="1" height="1"/><rect x="813.9" y="530.1" width="1" height="1"/><rect x="813.9" y="540.9" width="1" height="1"/><rect x="813.9" y="551.6" width="1" height="1"/><rect x="813.9" y="562.4" width="1" height="1"/><rect x="813.9" y="573.1" width="1" height="1"/><rect x="834.1" y="57.1" width="1" height="1"/><rect x="834.1" y="110.9" width="1" height="1"/><rect x="834.1" y="164.6" width="1" height="1"/><rect x="834.1" y="218.4" width="1" height="1"/><rect x="834.1" y="272.1" width="1" height="1"/><rect x="834.1" y="325.9" width="1" height="1"/><rect x="834.1" y="379.6" width="1" height="1"/><rect x="834.1" y="433.4" width="1" height="1"/><rect x="834.1" y="487.1" width="1" height="1"/><rect x="834.1" y="540.9" width="1" height="1"/><rect x="854.2" y="57.1" width="1" height="1"/><rect x="854.2" y="110.9" width="1" height="1"/><rect x="854.2" y="164.6" width="1" height="1"/><rect x="854.2" y="218.4" width="1" height="1"/><rect x="854.2" y="272.1" width="1" height="1"/><rect x="854.2" y="325.9" width="1" height="1"/><rect x="854.2" y="379.6" width="1" height="1"/><rect x="854.2" y="433.4" width="1" height="1"/><rect x="854.2" y="487.1" width="1" height="1"/><rect x="854.2" y="540.9" width="1" height="1"/><rect x="874.4" y="57.1" width="1" height="1"/><rect x="874.4" y="110.9" width="1" height="1"/><rect x="874.4" y="164.6" width="1" height="1"/><rect x="874.4" y="218.4" width="1" height="1"/><rect x="874.4" y="272.1" width="1" height="1"/><rect x="874.4" y="325.9" width="1" height="1"/><rect x="874.4" y="379.6" width="1" height="1"/><rect x="874.4" y="433.4" width="1" height="1"/><rect x="874.4" y="487.1" width="1" height="1"/><rect x="874.4" y="540.9" width="1" height="1"/><rect x="894.5" y="57.1" width="1" height="1"/><rect x="894.5" y="110.9" width="1" height="1"/><rect x="894.5" y="164.6" width="1" height="1"/><rect x="894.5" y="218.4" width="1" height="1"/><rect x="894.5" y="272.1" width="1" height="1"/><rect x="894.5" y="325.9" width="1" height="1"/><rect x="894.5" y="379.6" width="1" height="1"/><rect x="894.5" y="433.4" width="1" height="1"/><rect x="894.5" y="487.1" width="1" height="1"/><rect x="894.5" y="540.9" width="1" height="1"/><rect x="914.7" y="46.4" width="1" height="1"/><rect x="914.7" y="57.1" width="1" height="1"/><rect x="914.7" y="67.9" width="1" height="1"/><rect x="914.7" y="78.6" width="1" height="1"/><rect x="914.7" y="89.4" width="1" height="1"/><rect x="914.7" y="100.1" width="1" height="1"/><rect x="914.7" y="110.9" width="1" height="1"/><rect x="914.7" y="121.6" width="1" height="1"/><rect x="914.7" y="132.4" width="1" height="1"/><rect x="914.7" y="143.1" width="1" height="1"/><rect x="914.7" y="153.9" width="1" height="1"/><rect x="914.7" y="164.6" width="1" height="1"/><rect x="914.7" y="175.4" width="1" height="1"/><rect x="914.7" y="186.1" width="1" height="1"/><rect x="914.7" y="196.9" width="1" height="1"/><rect x="914.7" y="207.6" width="1" height="1"/><rect x="914.7" y="218.4" width="1" height="1"/><rect x="914.7" y="229.1" width="1" height="1"/><rect x="914.7" y="239.9" width="1" height="1"/><rect x="914.7" y="250.6" width="1" height="1"/><rect x="914.7" y="261.4" width="1" height="1"/><rect x="914.7" y="272.1" width="1" height="1"/><rect x="914.7" y="282.9" width="1" height="1"/><rect x="914.7" y="293.6" width="1" height="1"/><rect x="914.7" y="304.4" width="1" height="1"/><rect x="914.7" y="315.1" width="1" height="1"/><rect x="914.7" y="325.9" width="1" height="1"/><rect x="914.7" y="336.6" width="1" height="1"/><rect x="914.7" y="347.4" width="1" height="1"/><rect x="914.7" y="358.1" width="1" height="1"/><rect x="914.7" y="368.9" width="1" height="1"/><rect x="914.7" y="379.6" width="1" height="1"/><rect x="914.7" y="390.4" width="1" height="1"/><rect x="914.7" y="401.1" width="1" height="1"/><rect x="914.7" y="411.9" width="1" height="1"/><rect x="914.7" y="422.6" width="1" height="1"/><rect x="914.7" y="433.4" width="1" height="1"/><rect x="914.7" y="444.1" width="1" height="1"/><rect x="914.7" y="454.9" width="1" height="1"/><rect x="914.7" y="465.6" width="1" height="1"/><rect x="914.7" y="476.4" width="1" height="1"/><rect x="914.7" y="487.1" width="1" height="1"/><rect x="914.7" y="497.9" width="1" height="1"/><rect x="914.7" y="508.6" width="1" height="1"/><rect x="914.7" y="519.4" width="1" height="1"/><rect x="914.7" y="530.1" width="1" height="1"/><rect x="914.7" y="540.9" width="1" height="1"/><rect x="914.7" y="551.6" width="1" height="1"/><rect x="914.7" y="562.4" width="1" height="1"/><rect x="914.7" y="573.1" width="1" height="1"/><rect x="934.9" y="57.1" width="1" height="1"/><rect x="934.9" y="110.9" width="1" height="1"/><rect x="934.9" y="164.6" width="1" height="1"/><rect x="934.9" y="218.4" width="1" height="1"/><rect x="934.9" y="272.1" width="1" height="1"/><rect x="934.9" y="325.9" width="1" height="1"/><rect x="934.9" y="379.6" width="1" height="1"/><rect x="934.9" y="433.4" width="1" height="1"/><rect x="934.9" y="487.1" width="1" height="1"/><rect x="934.9" y="540.9" width="1" height="1"/><rect x="955" y="57.1" width="1" height="1"/><rect x="955" y="110.9" width="1" height="1"/><rect x="955" y="164.6" width="1" height="1"/><rect x="955" y="218.4" width="1" height="1"/><rect x="955" y="272.1" width="1" height="1"/><rect x="955" y="325.9" width="1" height="1"/><rect x="955" y="379.6" width="1" height="1"/><rect x="955" y="433.4" width="1" height="1"/><rect x="955" y="487.1" width="1" height="1"/><rect x="955" y="540.9" width="1" height="1"/><rect x="975.2" y="57.1" width="1" height="1"/><rect x="975.2" y="110.9" width="1" height="1"/><rect x="975.2" y="164.6" width="1" height="1"/><rect x="975.2" y="218.4" width="1" height="1"/><rect x="975.2" y="272.1" width="1" height="1"/><rect x="975.2" y="325.9" width="1" height="1"/><rect x="975.2" y="379.6" width="1" height="1"/><rect x="975.2" y="433.4" width="1" height="1"/><rect x="975.2" y="487.1" width="1" height="1"/><rect x="975.2" y="540.9" width="1" height="1"/><rect x="995.3" y="57.1" width="1" height="1"/><rect x="995.3" y="110.9" width="1" height="1"/><rect x="995.3" y="164.6" width="1" height="1"/><rect x="995.3" y="218.4" width="1" height="1"/><rect x="995.3" y="272.1" width="1" height="1"/><rect x="995.3" y="325.9" width="1" height="1"/><rect x="995.3" y="379.6" width="1" height="1"/><rect x="995.3" y="433.4" width="1" height="1"/><rect x="995.3" y="487.1" width="1" height="1"/><rect x="995.3" y="540.9" width="1" height="1"/></g>
<g font-size="7.2" fill="#dccc1c" stroke="#dccc1c" stroke-width="0.22"><text x="1014.5" y="59.4" text-anchor="end">4 V</text><text x="1014.5" y="113.1" text-anchor="end">3.5 V</text><text x="1014.5" y="166.8" text-anchor="end">3 V</text><text x="1014.5" y="220.5" text-anchor="end">2.5 V</text><text x="1014.5" y="274.2" text-anchor="end">2 V</text><text x="1014.5" y="327.9" text-anchor="end">1.5 V</text><text x="1014.5" y="381.6" text-anchor="end">1 V</text><text x="1014.5" y="435.3" text-anchor="end">500 mV</text><text x="1014.5" y="489" text-anchor="end">0 V</text><text x="1014.5" y="542.7" text-anchor="end">-500 mV</text></g>
<g font-size="7.05" fill="#bcbcbc" stroke="#bcbcbc" stroke-width="0.15"><text x="109.1" y="575.6" text-anchor="middle">-100 ns</text><text x="209.9" y="575.6" text-anchor="middle">0 s</text><text x="310.7" y="575.6" text-anchor="middle">100 ns</text><text x="411.5" y="575.6" text-anchor="middle">200 ns</text><text x="512.3" y="575.6" text-anchor="middle">300 ns</text><text x="613.1" y="575.6" text-anchor="middle">400 ns</text><text x="713.9" y="575.6" text-anchor="middle">500 ns</text><text x="814.7" y="575.6" text-anchor="middle">600 ns</text><text x="915.5" y="575.6" text-anchor="middle">700 ns</text></g>
<line x1="8" y1="487.55" x2="999" y2="487.55" stroke="#989898" stroke-width="1" stroke-dasharray="2.8 3.13" stroke-dashoffset="1.88"/>
<line x1="209.4" y1="65" x2="209.4" y2="579" stroke="#969696" stroke-width="1" stroke-dasharray="2.9 3.01"/>
<g fill="none" stroke-width="1.05" stroke-linejoin="round" stroke-linecap="round"><polyline points="206.3,484.2 206.8,474.2 207.2,452.5 208,390 209.3,340 211,260 212.3,200 214,181.1" stroke="#948500"/><polyline points="257.3,149.6 257.9,183.5 258.2,200 259,265 259.5,310 260,340 260.9,383.7 262.7,412 264.8,433.9 267,453.5" stroke="#948500"/><polyline points="281.7,471 282.8,462.3 283.2,416.4 283.8,383.7 284.5,340 285.2,290 286.2,250 287.7,200 289.5,183.5" stroke="#948500"/><polyline points="307.4,153.7 308.2,160.1 308.5,178.8 308.8,200 310.8,340 311.8,377.5 313.5,420 315,438.7" stroke="#948500"/><polyline points="321.2,455 323.1,469.9" stroke="#948500"/><polyline points="407.6,484.3 408.6,463.7 409.6,438.7 410.5,402.5 412.5,365 413.3,350 414.5,338.3" stroke="#948500"/><polyline points="484.5,310.3 484.9,319 485.2,338.3 485.5,350 487,390 488.8,427.5 489.2,440 490.3,455.8" stroke="#948500"/><polyline points="710.5,484.2 711,473.7 711.8,450.5 712.4,440 713.4,335 715.1,250 717.3,200 718.5,183.5" stroke="#948500"/><polyline points="726.1,156.6 727.2,146.1" stroke="#948500"/><polyline points="812,149.6 812.6,160.1 813.2,183.5 813.5,200 815.1,335 817.6,407.7 818.5,420 820,432.5 821.9,447.5 822.9,456.2" stroke="#948500"/><polyline points="185.3,477.4 187.9,485.8" stroke="#b9a80a"/><polyline points="214,181.1 215.8,169.4 217.5,162.4" stroke="#b9a80a"/><polyline points="219.3,166.5 221.6,153.1 223.7,142.5" stroke="#b9a80a"/><polyline points="231.6,152.5 233.3,145.5" stroke="#b9a80a"/><polyline points="240.4,149 243,136.5" stroke="#b9a80a"/><polyline points="254.7,136.1 256.1,141.4 257.3,149.6" stroke="#b9a80a"/><polyline points="270.1,453.5 271.8,463.4 274,471" stroke="#b9a80a"/><polyline points="289.5,183.5 291.2,171.8 293,164.2" stroke="#b9a80a"/><polyline points="294.5,165.9 297.1,156.6 299.4,149" stroke="#b9a80a"/><polyline points="300.6,149.6 302.3,155.4" stroke="#b9a80a"/><polyline points="315,438.7 316.9,447.5 318.5,453.7" stroke="#b9a80a"/><polyline points="323.1,469.9 325.3,477.7 326.8,469.9 328.7,463.4" stroke="#b9a80a"/><polyline points="330.6,468.1 332.7,476.2" stroke="#b9a80a"/><polyline points="335.8,482 337.5,472.4 339.7,461.2 341.8,472.4" stroke="#b9a80a"/><polyline points="360.3,465.2 362.4,473.7" stroke="#b9a80a"/><polyline points="414.5,338.3 415.9,328.6 417.9,320.9" stroke="#b9a80a"/><polyline points="497.6,469.5 499.7,480" stroke="#b9a80a"/><polyline points="501.6,485.8 503.4,478.9" stroke="#b9a80a"/><polyline points="558.2,471.4 559.9,477.9" stroke="#b9a80a"/><polyline points="588.7,473.7 591.8,484.2" stroke="#b9a80a"/><polyline points="614.2,484.2 616.6,475.8" stroke="#b9a80a"/><polyline points="718.5,183.5 720.2,171.8 722.3,162.4" stroke="#b9a80a"/><polyline points="723.9,166.2 726.1,156.6" stroke="#b9a80a"/><polyline points="729.3,142.5 730.7,148.4" stroke="#b9a80a"/><polyline points="736.3,153.1 737.5,146.1" stroke="#b9a80a"/><polyline points="744.8,149.6 748,138.5" stroke="#b9a80a"/><polyline points="806.2,151 807.3,145.5" stroke="#b9a80a"/><polyline points="825,450 826.5,457.5 828.1,466.2" stroke="#b9a80a"/><polyline points="841,474.9 844.1,464.7" stroke="#b9a80a"/><polyline points="1004.5,484.2 1005.3,489.3" stroke="#b9a80a"/><polyline points="1007.6,485.8 1009.2,478.9" stroke="#b9a80a"/><polyline points="1010.8,478.4 1012.4,484.2" stroke="#b9a80a"/><polyline points="7.2,479.8 11.1,479.8 14.2,475.8 14.7,477.9 20.5,477.9 22.4,474.2 26.3,479.5 29.5,482.1 31.6,477.9 33.7,479.5 36.3,475.3 38.4,478.4 42.1,473.4 44.7,475.3 47.1,471.6 50,475.3 52.6,474.4 54.5,477.9 57.4,474.2 60.5,478.2 61.6,475.8 63.2,478.2 65.3,475.3 68.4,474.2 71.6,475.8 74.7,479.5 77.4,474.4 80.5,478.2 82.1,475.3 84.2,476.3 87.4,484.2 89.5,479.5 92.4,477.9 97.9,488.4 101.9,480 105.3,486.3 106.8,482.1 109.5,481.6 112.6,475.3 115.8,479.5 121.1,473.7 124.2,477.4 126.3,476.3 130,482.1 132.1,475.8 135.3,479.5 139.5,478.4 142.6,471.6 145.8,475.8 148.7,471.6 151.6,474.7 154.2,473.7 156.3,478.4 158.9,475.8 160.5,477.4 161,475.6 167.4,475.6 167.9,474 168.9,475.6 176.3,475.6 178.9,478.4 182.8,473.4 185.3,477.4" stroke="#e2d116"/><polyline points="187.9,485.8 191,478.4 193.2,478.2 195.8,481.6 198.6,488.4 202.6,479.5 204.2,481 205.3,484.7 206.3,484.2" stroke="#e2d116"/><polyline points="217.5,162.4 219.3,166.5" stroke="#e2d116"/><polyline points="223.7,142.5 225.7,148.4 227.8,154.8 229.2,156 231.6,152.5" stroke="#e2d116"/><polyline points="233.3,145.5 235.1,142.5 236.8,146 238,149 240.4,149" stroke="#e2d116"/><polyline points="243,136.5 245,139.6 248,141.4 250.3,142.8 252.6,141.4 254.7,136.1" stroke="#e2d116"/><polyline points="267,453.5 268.6,450.3 270.1,453.5" stroke="#e2d116"/><polyline points="274,471 276.6,463.4 279.5,468.8 281.7,471" stroke="#e2d116"/><polyline points="293,164.2 294.5,165.9" stroke="#e2d116"/><polyline points="299.4,149 300.6,149.6" stroke="#e2d116"/><polyline points="302.3,155.4 304.1,156 305.8,153.1 307.4,153.7" stroke="#e2d116"/><polyline points="318.5,453.7 319.7,450.6 321.2,455" stroke="#e2d116"/><polyline points="328.7,463.4 330.6,468.1" stroke="#e2d116"/><polyline points="332.7,476.2 335.8,482" stroke="#e2d116"/><polyline points="341.8,472.4 343.7,475.3 345.9,473.7 349.9,463.4 352.4,471.2 354.9,478 358,469.9 360.3,465.2" stroke="#e2d116"/><polyline points="362.4,473.7 364.9,478.4 367.4,471.2 369.7,467.4 372.4,473.7 375.5,478 378,471.2 379.9,468.9 382.4,474.9 384.6,479.7 386.8,475.5 389.3,475.5 391.1,479.3 393,478 395.5,481.8 396.7,480.5 398.6,482.4 399.9,481.8 400.5,484.3 401.7,482 405.5,482.4 406.1,484.7 407.6,484.3" stroke="#e2d116"/><polyline points="417.9,320.9 419.8,316.5 420.8,318.5 423.2,312.7 425.3,309.8 427,310.8 428.5,314.1 429.9,312.7 432.8,316.5 434.7,312.7 435.9,310.8 437.2,312.7 439.6,312.7 440.5,310.8 441.5,312.7 444.9,305.4 446.8,308.3 447.8,305.9 448.7,308.3 451.2,304 452.6,305.4 455.5,305.4 456.9,307.9 459.8,310.3 461.3,306.4 462.3,308.3 464.7,308.3 465.6,310.3 466.6,308.8 467.6,310.3 469.5,308.3 470.9,305.9 472.4,308.3 474.8,305.4 476.3,305.4 477.2,308.3 479.6,308.3 480.3,310.3 481.9,305.9 483,308.3 484.5,310.3" stroke="#e2d116"/><polyline points="490.3,455.8 492.4,462.1 495.5,465.3 497.6,469.5" stroke="#e2d116"/><polyline points="499.7,480 501.6,485.8" stroke="#e2d116"/><polyline points="503.4,478.9 505.5,473.7 507.6,476.8 510.3,484.2 512.4,479.5 514.5,473.7 516.3,469.5 518.2,473.7 520.3,477.7 522.9,473.7 525.5,473.7 526.3,471.4 528.2,471.6 530.3,477.4 533.9,479.8 536.4,473.7 539.2,477.4 540.8,476.3 543.9,474.7 545.7,470 548.2,473.7 549.7,473.7 550.8,471.4 552.4,471.4 553.9,473.7 555.5,473.7 556.6,471.4 558.2,471.4" stroke="#e2d116"/><polyline points="559.9,477.9 561.8,475.3 563.4,475.3 565.2,473.7 568.2,475.8 573.9,474.2 576.6,475.6 578.2,473.7 581.3,477.7 583.9,476.3 586.6,473.7 588.7,473.7" stroke="#e2d116"/><polyline points="591.8,484.2 593.9,478.4 596.8,476.3 599.7,482.1 602.7,487.9 606.5,478.4 609.5,484.2 614.2,484.2" stroke="#e2d116"/><polyline points="616.6,475.8 617.9,477.9 618.9,475.8 621.6,478.9 624.7,475.8 627.4,473.7 630,476.3 633.7,482.1 637.4,476.3 638.9,477.9 641.3,473.7 643.7,477.9 647.2,471.4 648.9,473.7 650.5,471.6 652.1,473.7 653.7,471.4 655.3,475.3 657.4,473.7 660,475.6 663.2,473.9 665.3,476.8 666.3,475.8 668.2,477.9 671,473.7 673.7,473.9 675.3,477.9 677.4,477.9 678.9,475.3 681.9,473.9 683.7,475.8 685.3,479.5 687.4,475.3 689.7,473.5 691.6,477.9 693.7,484.2 696.3,478.9 698.9,477.9 701,482.1 703.7,488.4 705.8,484.2 707.6,480 709.5,482.1 710.5,484.2" stroke="#e2d116"/><polyline points="722.3,162.4 723.9,166.2" stroke="#e2d116"/><polyline points="727.2,146.1 729.3,142.5" stroke="#e2d116"/><polyline points="730.7,148.4 732.1,153.1 735.2,155.6 736.3,153.1" stroke="#e2d116"/><polyline points="737.5,146.1 739.5,142.5 744.8,149.6" stroke="#e2d116"/><polyline points="748,138.5 750,140.8 753,142 755.5,145.5 757.9,138.8 760,138.8 762.3,144.3 763.5,143.1 764.6,144.9 767,142 768.5,139 769.9,142.5 771.7,142.5 773.4,140.6 775.2,140.8 776.9,142.9 779.9,140.6 785.1,140.6 786.9,142.9 789.2,138.5 791.5,141.4 793.9,146.6 796.8,144.9 798.6,142.5 800.3,142.5 802.7,147.2 806.2,151" stroke="#e2d116"/><polyline points="807.3,145.5 809.1,144.3 810.3,145.1 812,149.6" stroke="#e2d116"/><polyline points="822.9,456.2 825,450" stroke="#e2d116"/><polyline points="828.1,466.2 829.7,471.2 833.1,463.4 835,467.4 837.2,473.7 841,474.9" stroke="#e2d116"/><polyline points="844.1,464.7 846.8,471.2 849.3,469.3 851.8,471.2 854.9,463.1 857.4,469.3 859.7,473.7 863.1,469.3 866.2,469.3 868.7,473.7 870.5,478.1 872.4,472.4 874.7,467.4 877.4,473.1 880.5,475.6 883,471.2 884.9,469.3 888,475.6 891.1,473.7 894.3,479.7 897.4,475.6 901.8,479.9 904.6,484.7 908,479.7 910.5,479.9 913.4,484.7 915.5,478.7 918.2,477.4 920.3,473.7 922.9,478.4 926.1,474.2 928.2,475.3 930.8,473.7 933.9,476.3 937.1,480 940.3,475.3 942.6,479.8 945.5,475.3 947.6,475.3 949.7,471.4 951.8,473.7 954.8,469.5 958.2,474.2 960.8,471.4 962.9,475.8 966.6,473.7 971.3,477.4 975.2,473.7 978.2,477.4 980.3,474.7 986.6,475.3 988.5,477.9 990.8,473.7 993.9,480 997.1,481.6 998.7,477.9 1002.4,477.9 1004.5,484.2" stroke="#e2d116"/><polyline points="1005.3,489.3 1007.6,485.8" stroke="#e2d116"/><polyline points="1009.2,478.9 1010.8,478.4" stroke="#e2d116"/><polyline points="1012.4,484.2 1013.9,484.7 1015.5,483.2 1016.3,480" stroke="#e2d116"/></g>
<!-- visual trigger areas -->
<g fill="rgba(0,255,255,0.5)" stroke="rgba(0,255,255,0.55)" stroke-width="1">
<rect x="32.4" y="57.5" width="151.2" height="376"/>
<rect x="259" y="192" width="25.8" height="349"/>
<rect x="436" y="192" width="25.6" height="349"/>
<rect x="840" y="57.5" width="151.6" height="376"/>
</g>
</g>
<!-- label box -->
<rect x="17.2" y="52.1" width="92.8" height="17" fill="rgba(73,73,73,0.86)"/>
<text x="20.4" y="62.9" font-size="9.9" fill="#e4e4e4" stroke="#e4e4e4" stroke-width="0.2">A1 &amp; (A2 | A3) &amp; A4</text>
<!-- area labels -->
<g font-size="7" fill="#d8f0f0">
<text x="101.3" y="240.8">A1</text><text x="265.6" y="361.8">A2</text><text x="442.4" y="361.8">A3</text><text x="909" y="240.8">A4</text>
</g>
<g fill="#f4ffff">
<rect x="101.1" y="243" width="13" height="1.4"/><rect x="265.3" y="363.3" width="12.8" height="1.7"/><rect x="442.4" y="363.3" width="12.8" height="1.7"/><rect x="908.9" y="243" width="13" height="1.4"/>
</g>
<g stroke="#f21628" stroke-width="1.7" fill="none">
<path d="M104.4 246 L111.2 253.8 M111.2 246 L104.4 253.8"/>
<path d="M911.9 246 L918.6 253.8 M918.6 246 L911.9 253.8"/>
</g>
<g stroke="#4fd03a" stroke-width="1.7" fill="none" stroke-linejoin="miter">
<path d="M267.2 369.6 L270.4 373.4 L276.6 367.4"/>
<path d="M443.6 369.6 L446.8 373.4 L453 367.4"/>
</g>
<!-- trigger T marker -->
<g>
<path d="M202.9 42 L215.1 42 L209 47.2 Z" fill="#f08a1e"/>
<path d="M203.5 47.8 H214.6 V59.4 H211.4 L209 63.6 L206.6 59.4 H203.5 Z" fill="#000" stroke="#f08a1e" stroke-width="1.2"/>
<path d="M206.2 51 H212 M209.1 51 V57.2" stroke="#f08a1e" stroke-width="1.5" fill="none"/>
</g>
<!-- title-bar trigger marker -->
<g>
<path d="M407 24 L415.2 24 L411.1 27.6 Z" fill="#f08a1e"/>
<path d="M407.6 31.6 H414.6 V38.6 H412.6 L411.1 41 L409.6 38.6 H407.6 Z" fill="#000" stroke="#f08a1e" stroke-width="1.1"/>
<path d="M409.3 33.8 H412.9 M411.1 33.8 V37.4" stroke="#f08a1e" stroke-width="1.2" fill="none"/>
</g>
<path d="M348 27.5 H344.2 V37.6 H348" stroke="#d4d4d4" stroke-width="1" fill="none"/>
<path d="M676.3 27.5 H680.3 V37.4 H676.3" stroke="#9a9a9a" stroke-width="1" fill="none"/>
<!-- C1 marker -->
<path d="M10.3 303 H23.6 L31.2 310.3 L23.6 317.6 H10.3 Q9.3 317.6 9.3 316.6 V304 Q9.3 303 10.3 303 Z" fill="#f7ea38"/>
<text x="14.8" y="313" font-size="7.7" font-weight="bold" fill="#222" letter-spacing="2.1">C1</text>
<!-- trigger level arrow -->
<path d="M1003.8 310.9 L1010.6 305 V309.9 H1016.3 V311.9 H1010.6 V316.8 Z" fill="#f7ea38"/>
<!-- zoom corner icon -->
<path d="M990.6 46 H1012.2 V67.5 Z" fill="#575757"/>
<circle cx="1007.9" cy="50" r="2.35" stroke="#cdcdcd" stroke-width="1" fill="#4c4c4c"/>
<path d="M1005.9 52 L1001.9 55.6" stroke="#cdcdcd" stroke-width="1.4" fill="none"/>
<g fill="#e8e8e8"><rect x="5.4" y="21.9" width="1.8" height="559.1"/><rect x="1016.3" y="21.9" width="1.9" height="559.1"/><rect x="5.4" y="21.9" width="1012.8" height="2.2"/><rect x="5.4" y="578.9" width="1012.8" height="2.1"/></g>
<!-- handle dots -->
<g fill="#e0e0e0"><rect x="1022" y="295.6" width="2.2" height="2.2"/><rect x="1022" y="300.6" width="2.2" height="2.2"/><rect x="1022" y="305.6" width="2.2" height="2.2"/></g>
</svg>

<div class="abs" id="panel"></div>
<div class="abs" style="left:1028px;top:21px;width:106px;text-align:center;font-size:9.6px;font-weight:bold;color:#f0f0f0;line-height:13px;letter-spacing:0.1px;">Add New...</div>
<div class="btn pb" style="left:1033px;top:36px;line-height:24.8px">Cursors</div>
<div class="btn pb" style="left:1084px;top:36px;line-height:24.8px">Callout</div>
<div class="btn pb" style="left:1033px;top:69px;">Measure</div>
<div class="btn pb" style="left:1084px;top:69px;">Search</div>
<div class="btn pb" style="left:1033px;top:102px;line-height:9.9px;padding-top:2px;">Results<br>Table</div>
<div class="btn pb" style="left:1084px;top:102px;">Plot</div>
<div class="sep" style="left:1030px;top:133px;width:103px;height:1px;"></div>
<div class="btn pb" style="left:1033px;top:137px;"></div>
<div class="btn pb" style="left:1084px;top:137px;">More...</div>
<div class="sep" style="left:1030px;top:169px;width:103px;height:1px;"></div>
<svg class="abs" style="left:1040px;top:136px" width="35" height="30" viewBox="0 0 35 30">
<g fill="#d2d2d2"><rect x="8.3" y="7.7" width="1.5" height="1.5"/><rect x="8.3" y="11.2" width="1.5" height="1.5"/><rect x="8.3" y="14.8" width="1.5" height="1.5"/><rect x="8.3" y="18.3" width="1.5" height="1.5"/><rect x="12.5" y="7.7" width="1.5" height="1.5"/><rect x="12.5" y="18.3" width="1.5" height="1.5"/><rect x="16.8" y="7.7" width="1.5" height="1.5"/><rect x="16.8" y="18.3" width="1.5" height="1.5"/><rect x="20.8" y="7.7" width="1.5" height="1.5"/><rect x="20.8" y="11.2" width="1.5" height="1.5"/><rect x="20.8" y="14.8" width="1.5" height="1.5"/></g>
<circle cx="16.6" cy="12.6" r="2.55" fill="none" stroke="#bdbdbd" stroke-width="1"/>
<path d="M14.7 14.8 L11.5 16.6" stroke="#d4d4d4" stroke-width="1.5" stroke-linecap="round"/>
<path d="M19.2 16.6 L23.9 18.6 L22.3 19.5 L24 21.4 L22.9 22.2 L21.4 20.2 L20.4 21.6 Z" fill="#cfcfcf"/>
</svg>

<!-- bottom bar -->
<div class="abs" style="left:7px;top:583px;width:64.6px;height:50.4px;border-radius:3px;background:#c9c9c9;overflow:hidden;color:#101010;font-size:9.8px;-webkit-text-stroke:0.2px #101010;">
<div style="position:absolute;left:0;top:0;right:0;height:11.6px;background:#fdf03a;border-bottom:1px solid #a9a9c4;"></div>
<p style="position:absolute;margin:0;left:3.8px;top:0.5px;font-size:9.1px;line-height:11px;color:#1a1a00;">Ch 1</p>
<p style="position:absolute;margin:0;left:5px;top:14.5px;line-height:11px;white-space:nowrap;">500 mV/div</p>
<p style="position:absolute;margin:0;left:5px;top:26.5px;line-height:11px;">1 M&#937;</p>
<p style="position:absolute;margin:0;left:5px;top:38.6px;line-height:11px;white-space:nowrap;">250 MHz</p>
<svg style="position:absolute;left:46.5px;top:39.5px" width="9" height="8" viewBox="0 0 9 8"><text x="0" y="4.6" font-size="5" font-weight="bold" fill="#222">B</text><path d="M3.6 5 H5 L5.8 6.4 L6.8 5 H8.4" stroke="#222" stroke-width="1.1" fill="none"/></svg>
</div>
<div class="btn cb" style="left:411.3px;"><i style="background:#1fc6d0"></i>2</div>
<div class="btn cb" style="left:439.7px;"><i style="background:#e0304f"></i>3</div>
<div class="btn cb" style="left:468.1px;"><i style="background:#86c522"></i>4</div>
<div class="btn cb" style="left:496.3px;"><i style="background:#f08a22"></i>5</div>
<div class="btn cb" style="left:524.6px;"><i style="background:#2525c8"></i>6</div>
<div class="sep" style="left:556px;top:583px;width:1px;height:50px;"></div>
<div class="btn tb" style="left:564px;"><i style="background:#f0901f"></i><b style="top:12px">Add</b><b style="top:20.8px">New</b><b style="top:31px">Math</b></div>
<div class="btn tb" style="left:592.3px;"><i style="background:#c9c9e2"></i><b style="top:12px">Add</b><b style="top:20.8px">New</b><b style="top:31px">Ref</b></div>
<div class="btn tb" style="left:620.6px;"><i style="background:#c24fe4"></i><b style="top:12px">Add</b><b style="top:20.8px">New</b><b style="top:31px">Bus</b></div>
<div class="sep" style="left:651px;top:583px;width:1px;height:50px;"></div>
<div class="btn tb" style="left:658.6px;width:25.5px"><i style="background:#4a4a4a;width:20.5px"></i><b style="top:21.3px">DVM</b></div>
<div class="btn tb" style="left:690.2px;width:25.5px"><i style="background:#4a4a4a;width:20.5px"></i><b style="top:21.3px">AFG</b></div>
<div class="sep" style="left:722px;top:583px;width:1px;height:50px;"></div>
<div class="badge" style="left:730px;width:125.5px;"><div class="hd"><span>Horizontal</span></div>
<p style="left:3.8px;top:13.6px">100 ns/div</p><p style="left:71.5px;top:13.6px">1 &#181;s</p>
<p style="left:3.6px;top:25.5px;letter-spacing:-0.44px;word-spacing:-0.25px">SR: 6.25 GS/s</p><p style="left:71.5px;top:25.5px">160 ps/pt</p>
<p style="left:3.6px;top:37px;letter-spacing:-0.05px">RL: 6.25 kpts</p><p style="left:80px;top:37px">20%</p>
<svg style="position:absolute;left:70.8px;top:38.6px" width="6.2" height="8" viewBox="0 0 7 9"><path d="M0.7 0.7 H5.9 V6 L3.3 8.4 L0.7 6 Z" fill="#111" stroke="#f08a1e" stroke-width="1.1"/><path d="M2 2.4 H4.6 M3.3 2.4 V5.4" stroke="#f08a1e" stroke-width="1" fill="none"/></svg>
</div>
<div class="badge" style="left:859.5px;width:100px;"><div class="hd"><span style="left:2.6px">Trigger <b style="color:#27e027;letter-spacing:-0.42px;-webkit-text-stroke:0">(Visual)</b></span></div>
<div style="position:absolute;left:3.4px;top:14.2px;width:17.4px;height:9.6px;border:1px solid #5d5a10;border-radius:3px;background:#f7ee34;text-align:center;line-height:9.6px;font-size:9.6px;">1</div>
<svg style="position:absolute;left:28px;top:15px" width="13" height="10" viewBox="0 0 13 10"><path d="M0.6 8.6 H3.2 L8.6 1.4 H11" stroke="#6b6ba6" stroke-width="1.1" fill="none"/></svg>
<p style="left:45px;top:13.6px;letter-spacing:-0.1px">1.64 V</p>
</div>
<div class="badge" style="left:964px;width:94px;"><div class="hd"><span>Acquisition</span></div>
<p style="left:3.6px;top:13.6px">Auto,</p><p style="right:4.6px;top:13.6px">Analyze</p>
<p style="left:3.6px;top:25.5px">Sample: 8 bits</p>
<p style="left:3.6px;top:37px">Single: 0 /1</p>
</div>
<div class="sep" style="left:1065px;top:583px;width:1px;height:50px;"></div>
<div class="abs" style="left:1072px;top:583.4px;width:57px;height:22.4px;border-radius:3px;background:#ff1f2e;color:#fff;font-weight:bold;font-size:8.5px;line-height:21px;text-align:center;">Preview</div>
<svg class="abs" style="left:1100px;top:634px" width="10" height="7" viewBox="0 0 10 7"><path d="M3.4 3.7 L3.4 10 L8 8.4 Z" fill="#111" stroke="#e0e0e0" stroke-width="0.9"/></svg>
</div></body></html>
